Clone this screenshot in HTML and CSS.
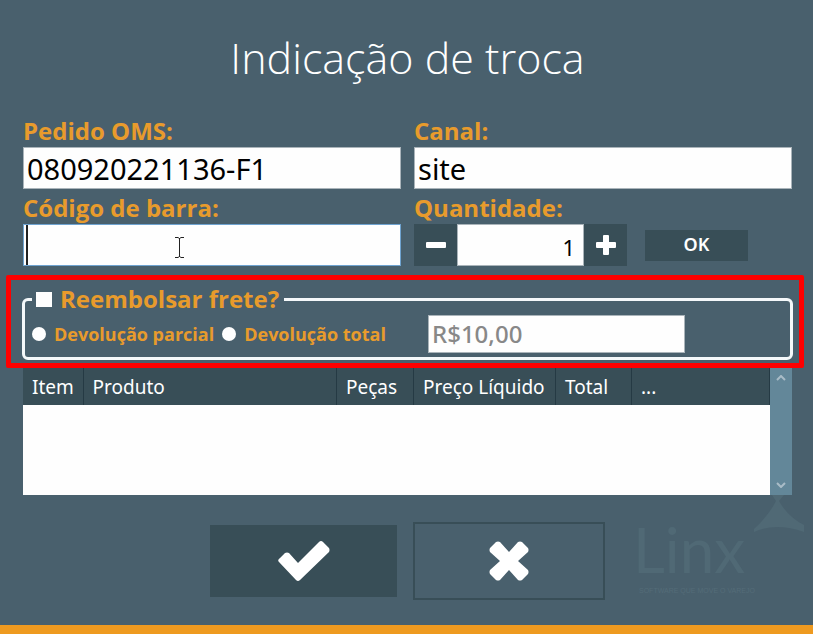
FILE: index.html
```
<!DOCTYPE html>
<html lang="pt-BR">
<head>
  <meta charset="UTF-8" />
  <meta name="viewport" content="width=device-width, initial-scale=1.0" />
  <title>Indicação de troca</title>
  <link rel="stylesheet" href="styles.css">
</head>
<body>
  <form class="page">
    <svg class="logo" viewBox="0 0 190 135" aria-hidden="true">
      <path class="logo-mark" d="M149 5h12l-5 6q9 16 25 24v7q-28-10-50 0v-3q15-14 22-28z" />
      <text class="logo-name" x="10" y="83">Linx</text>
      <text class="logo-tag" x="16" y="103">SOFTWARE QUE MOVE O VAREJO</text>
    </svg>

    <h1 class="title">Indicação de troca</h1>

    <!-- Dados do pedido -->
    <div class="fields">
      <div class="field">
        <label class="label" for="pedido">Pedido OMS:</label>
        <input class="input" id="pedido" type="text" value="080920221136-F1">
      </div>
      <div class="field">
        <label class="label" for="canal">Canal:</label>
        <input class="input" id="canal" type="text" value="site">
      </div>
      <div class="field">
        <label class="label" for="codigo">Código de barra:</label>
        <div class="barcode">
          <input class="input input-active" id="codigo" type="text">
          <span class="caret"></span>
          <svg class="ibeam" viewBox="0 0 11 23" aria-hidden="true">
            <path d="M1 1.500h3l1.500 1 1.500-1h3M5.500 2v19M1 21.500h3l1.500-1 1.500 1h3" />
          </svg>
        </div>
      </div>
      <div class="field">
        <label class="label" for="quantidade">Quantidade:</label>
        <div class="quantity">
          <button class="step" type="button" aria-label="Diminuir">
            <svg viewBox="0 0 20 20"><rect x="0" y="7" width="20" height="6" rx="1" /></svg>
          </button>
          <input class="input qty-input" id="quantidade" type="text" value="1">
          <button class="step" type="button" aria-label="Aumentar">
            <svg viewBox="0 0 20 20"><path d="M8 0h4q1 0 1 1v6h6q1 0 1 1v4q0 1-1 1h-6v6q0 1-1 1H8q-1 0-1-1v-6H1q-1 0-1-1V8q0-1 1-1h6V1q0-1 1-1z" /></svg>
          </button>
          <button class="ok" type="button">OK</button>
        </div>
      </div>
    </div>

    <!-- Reembolso do frete -->
    <div class="highlight">
      <fieldset class="refund">
        <legend class="refund-legend">
          <input class="check" id="reembolsar" type="checkbox">
          <label class="label" for="reembolsar">Reembolsar frete?</label>
        </legend>
        <div class="refund-row">
          <div class="options">
            <input class="radio" id="parcial" name="devolucao" type="radio">
            <label class="option-label" for="parcial">Devolução parcial</label>
            <input class="radio" id="total" name="devolucao" type="radio">
            <label class="option-label" for="total">Devolução total</label>
          </div>
          <input class="input amount" type="text" value="R$10,00" aria-label="Valor do frete" disabled>
        </div>
      </fieldset>
    </div>

    <!-- Itens -->
    <div class="items">
      <table class="table">
        <thead>
          <tr>
            <th class="col-item">Item</th>
            <th>Produto</th>
            <th class="col-pecas">Peças</th>
            <th class="col-preco">Preço Líquido</th>
            <th class="col-total">Total</th>
            <th class="col-more">...</th>
          </tr>
        </thead>
        <tbody>
          <tr><td colspan="6"></td></tr>
        </tbody>
      </table>
      <div class="scrollbar">
        <svg viewBox="0 0 10 6"><path d="M1 5l4-4 4 4" /></svg>
        <svg viewBox="0 0 10 6"><path d="M1 1l4 4 4-4" /></svg>
      </div>
    </div>

    <div class="actions">
      <button class="action confirm" type="button" aria-label="Confirmar">
        <svg viewBox="0 0 52 40"><path d="M2 17l5-5q2-1 4 0l9 10L41 1q2-2 4 0l6 6q1 2 0 4L22 39q-2 2-4 0L1 21q-2-2 1-4z" /></svg>
      </button>
      <button class="action cancel" type="button" aria-label="Cancelar">
        <svg viewBox="0 0 40 40"><path d="M1 7l6-6q2-1 4 0l9 10L29 1q2-1 4 0l6 6q1 2 0 4L29 20l10 9q1 2 0 4l-6 6q-2 1-4 0l-9-10-9 10q-2 1-4 0l-6-6q-1-2 0-4l10-9L1 11q-1-2 0-4z" /></svg>
      </button>
    </div>
  </form>
</body>
</html>
```
FILE: styles.css
```
* {
  margin: 0; padding: 0;
  box-sizing: border-box;
  font-family: "Noto Sans", "Open Sans", sans-serif;
}
body {
  background: #49606d;
  color: #fff;
}
.page {
  position: relative;
  min-height: 100vh;
  padding: 28px 21px 0 23px;
  border-bottom: 9px solid #ee9a20;
}
.title {
  padding-bottom: 24px;
  font-family: "Open Sans", sans-serif;
  font-size: 43px;
  font-weight: 300;
  line-height: 60px;
  text-align: center;
}
.fields {
  display: grid;
  grid-template-columns: 1fr 1fr;
  column-gap: 13px;
}
.label {
  display: block;
  color: #e89b2c;
  font-family: "Open Sans", sans-serif;
  font-size: 24px;
  font-weight: 700;
  line-height: 28px;
}
.field .label {
  padding-top: 3px;
  line-height: 32px;
}
.input {
  display: block;
  width: 100%;
  height: 42px;
  padding: 0 3px;
  border: 1px solid #aab4ba;
  background: #fefefe;
  color: #000;
  font-size: 29px;
}
.input-active {
  border-color: #6fa3d0;
}
.barcode {
  position: relative;
}
.caret {
  position: absolute;
  top: 1px;
  left: 3px;
  width: 2px;
  height: 40px;
  background: #222;
}
.ibeam {
  position: absolute;
  top: 12px;
  left: 151px;
  width: 11px;
  height: 23px;
  fill: none;
  stroke: #222;
}
.quantity {
  display: flex;
  align-items: center;
}
.step {
  display: flex;
  justify-content: center;
  align-items: center;
  width: 43px;
  height: 42px;
  border: 0;
  background: #384e57;
}
.step svg {
  width: 20px;
  height: 20px;
  fill: #fff;
}
.qty-input {
  width: 127px;
  padding: 3px 8px 0 3px;
  font-size: 22px;
  text-align: right;
}
.ok {
  width: 103px;
  height: 31px;
  margin-left: 18px;
  padding-bottom: 3px;
  border: 0;
  background: #384e57;
  color: #fff;
  font-size: 18px;
  font-weight: 600;
}

.highlight {
  margin: 9px -12px 0 -17px;
  padding: 5px 6px 3px 11px;
  border: 5px solid #fe0000;
  border-radius: 2px;
}
.refund {
  border: 3px solid #f4f8fa;
  border-radius: 6px;
  padding: 0 5px 4px;
}
.refund-legend {
  display: flex;
  align-items: center;
  gap: 8px;
  margin-left: 2px;
  padding: 0 5px 0 4px;
}
.check {
  appearance: none;
  width: 16px;
  height: 15px;
  background: #fefefe;
}
.refund-row {
  display: flex;
  padding-top: 2px;
}
.options {
  display: flex;
  align-items: center;
  gap: 8px;
  width: 398px;
  padding-left: 2px;
}
.radio {
  appearance: none;
  width: 14px;
  height: 14px;
  border-radius: 50%;
  background: #fefefe;
}
.option-label {
  color: #e89b2c;
  font-family: "Open Sans", sans-serif;
  font-size: 18px;
  font-weight: 700;
}
.amount {
  width: 257px;
  height: 38px;
  padding-bottom: 2px;
  color: #888;
  font-size: 24px;
  font-weight: 500;
}

.items {
  display: flex;
}
.table {
  flex: 1;
  table-layout: fixed;
  border-collapse: collapse;
  background: #fefefe;
}
.table th {
  height: 37px;
  padding: 0 0 0 9px;
  border-right: 1px solid #253a44;
  background: #384e57;
  font-size: 19px;
  font-weight: 400;
  text-align: left;
  white-space: nowrap;
}
.table td {
  height: 90px;
}
.col-item { width: 60px; }
.col-pecas { width: 77px; }
.col-preco { width: 142px; }
.col-total { width: 76px; }
.col-more { width: 138px; }
.scrollbar {
  display: flex;
  flex-direction: column;
  justify-content: space-between;
  align-items: center;
  width: 22px;
  padding: 7px 0;
  background: #638799;
}
.scrollbar svg {
  width: 10px;
  height: 6px;
  fill: none;
  stroke: #a9bcc7;
  stroke-width: 2;
}

.actions {
  display: flex;
  justify-content: center;
  align-items: center;
  gap: 16px;
  padding: 27px 0 25px;
}
.action {
  display: flex;
  justify-content: center;
  align-items: center;
  border: 0;
}
.action svg {
  height: 40px;
  fill: #fff;
}
.confirm {
  width: 187px;
  height: 72px;
  background: #384e57;
}
.cancel {
  width: 192px;
  height: 78px;
  border: 2px solid #384e57;
  background: none;
}

/* Marca d'água */
.logo {
  position: absolute;
  right: 0;
  bottom: 0;
  width: 190px;
  height: 135px;
}
.logo-mark {
  fill: #506975;
}
.logo-name {
  fill: #506975;
  font-family: Lato, sans-serif;
  font-size: 62px;
}
.logo-tag {
  fill: #546c78;
  font-family: "Liberation Sans", sans-serif;
  font-size: 7px;
}
```
